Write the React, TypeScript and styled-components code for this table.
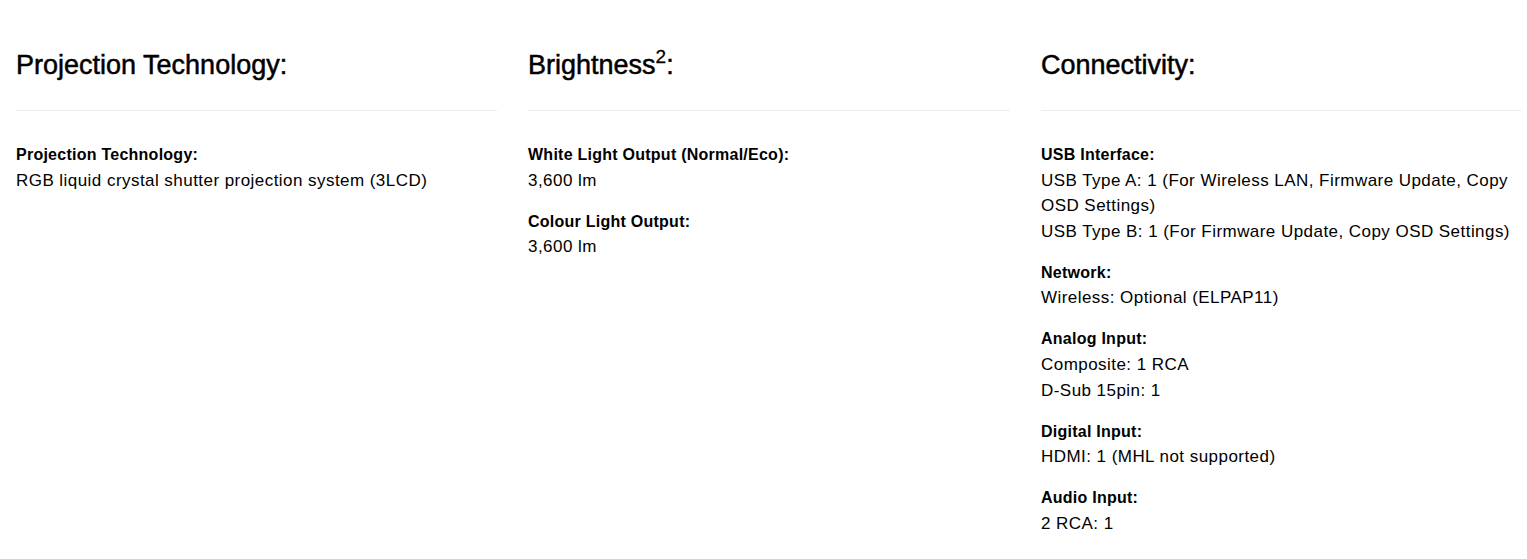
import styled, { createGlobalStyle } from "styled-components";

const GlobalStyle = createGlobalStyle`
  body {
    margin: 0;
    background: #fff;
    font-family: "Liberation Sans", Arial, sans-serif;
    color: #000;
  }
`

const Page = styled.div`
  display: grid;
  grid-template-columns: 481px 482px 481px;
  column-gap: 31px;
  padding: 50px 5px 20px 16px;
`

const Column = styled.section`
  display: flex;
  flex-direction: column;
`

const Title = styled.h2`
  margin: 0;
  font-size: 27px;
  font-weight: normal;
  line-height: 30px;
  padding-bottom: 30px;
  border-bottom: 1px solid #ededed;
  -webkit-text-stroke: 0.5px #000;

  sup {
    font-size: 19px;
    line-height: 0;
    vertical-align: 0;
    position: relative;
    top: -11px;
    -webkit-text-stroke: 0.3px #000;
  }
`

const List = styled.dl`
  margin: 31px 0 0;
  display: flex;
  flex-direction: column;
  row-gap: 15.4px;
`

const Item = styled.div`
  line-height: 25.6px;
`

const Label = styled.dt`
  font-size: 16px;
  font-weight: bold;
  letter-spacing: 0.25px;
`

const Value = styled.dd`
  margin: 0;
  font-size: 17px;
  letter-spacing: 0.45px;
`

type Spec = { label: string; values: string[] }

const columns: { title: React.ReactNode; specs: Spec[] }[] = [
  {
    title: "Projection Technology:",
    specs: [
      { label: "Projection Technology:", values: ["RGB liquid crystal shutter projection system (3LCD)"] },
    ],
  },
  {
    title: <>Brightness<sup>2</sup>:</>,
    specs: [
      { label: "White Light Output (Normal/Eco):", values: ["3,600 lm"] },
      { label: "Colour Light Output:", values: ["3,600 lm"] },
    ],
  },
  {
    title: "Connectivity:",
    specs: [
      {
        label: "USB Interface:",
        values: [
          "USB Type A: 1 (For Wireless LAN, Firmware Update, Copy OSD Settings)",
          "USB Type B: 1 (For Firmware Update, Copy OSD Settings)",
        ],
      },
      { label: "Network:", values: ["Wireless: Optional (ELPAP11)"] },
      { label: "Analog Input:", values: ["Composite: 1 RCA", "D-Sub 15pin: 1"] },
      { label: "Digital Input:", values: ["HDMI: 1 (MHL not supported)"] },
      { label: "Audio Input:", values: ["2 RCA: 1"] },
    ],
  },
]

const App = () => {
  return (
    <>
      <GlobalStyle />
      <Page>
        {columns.map((col, i) => (
          <Column key={i}>
            <Title>{col.title}</Title>
            <List>
              {col.specs.map((spec) => (
                <Item key={spec.label}>
                  <Label>{spec.label}</Label>
                  {spec.values.map((v) => (
                    <Value key={v}>{v}</Value>
                  ))}
                </Item>
              ))}
            </List>
          </Column>
        ))}
      </Page>
    </>
  )
}

export default App
